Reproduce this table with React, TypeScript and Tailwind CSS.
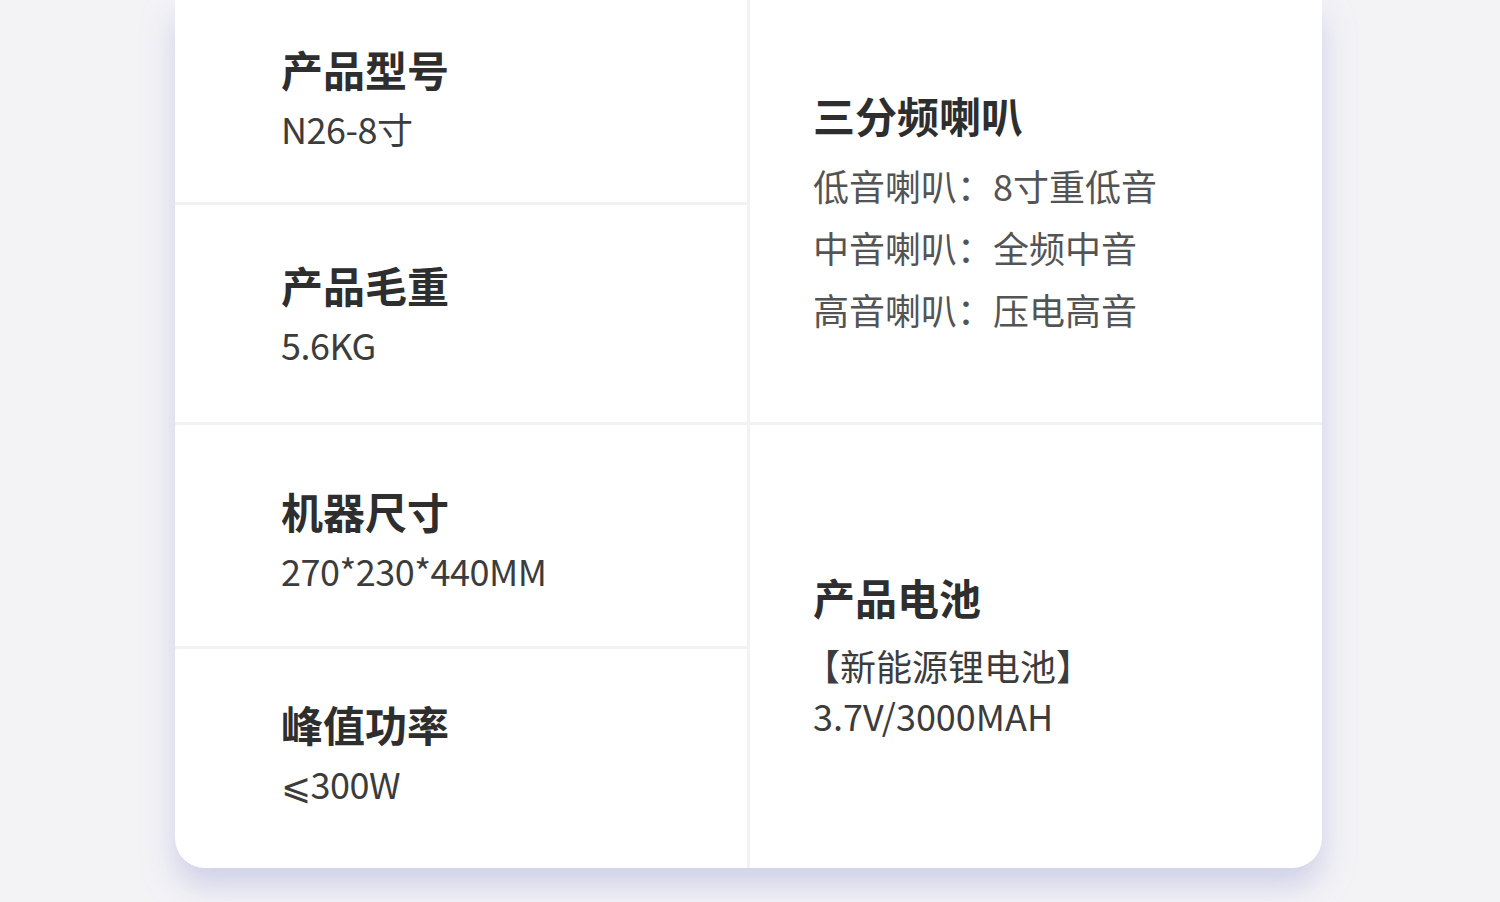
import React from "react";

const font = { fontFamily: '"Noto Sans CJK SC", "Noto Sans", sans-serif' };

type Spec = { title: string; value: string; cls: string; last?: boolean };

const leftSpecs: Spec[] = [
  { title: "产品型号", value: "N26-8寸", cls: "h-[205px] pb-[7px]" },
  { title: "产品毛重", value: "5.6KG", cls: "h-[220px]" },
  { title: "机器尺寸", value: "270*230*440MM", cls: "h-[224px] pt-[8px]" },
  { title: "峰值功率", value: "⩽300W", cls: "h-[219px] pb-[12px]", last: true },
];

const speakers = [
  ["低音喇叭：", "8寸重低音"],
  ["中音喇叭：", "全频中音"],
  ["高音喇叭：", "压电高音"],
];

export default function App() {
  return (
    <div className="h-[902px] w-full overflow-hidden bg-[#f3f3f6]" style={font}>
      <div className="ml-[175px] flex h-[868px] w-[1147px] rounded-b-[30px] bg-white shadow-[0_18px_30px_rgba(185,185,225,0.6)]">
        {/* left column */}
        <div className="flex w-[575px] flex-col border-r-[3px] border-[#f2f2f2]">
          {leftSpecs.map((s) => (
            <div
              key={s.title}
              className={`${s.cls} flex flex-col justify-center pl-[106px] ${
                s.last ? "" : "border-b-[3px] border-[#f2f2f2]"
              }`}
            >
              <div className="text-[42px] font-bold leading-[50px] text-[#2e2e2e]">{s.title}</div>
              <div className="mt-[10px] text-[36px] leading-[48px] tracking-[-0.5px] text-[#3c3c3c]">
                {s.value}
              </div>
            </div>
          ))}
        </div>

        {/* right column */}
        <div className="flex flex-1 flex-col">
          <div className="flex h-[425px] flex-col justify-center border-b-[3px] border-[#f2f2f2] pl-[63px] pt-[7px]">
            <div className="text-[42px] font-bold leading-[50px] text-[#2e2e2e]">三分频喇叭</div>
            <div className="mt-[14px] flex flex-col">
              {speakers.map(([k, v]) => (
                <div key={k} className="flex text-[36px] leading-[62px] text-[#545454]">
                  <span>{k}</span>
                  <span>{v}</span>
                </div>
              ))}
            </div>
          </div>
          <div className="flex flex-1 flex-col justify-center pl-[63px] pt-[18px]">
            <div className="text-[42px] font-bold leading-[50px] text-[#2e2e2e]">产品电池</div>
            <div className="-ml-[9px] mt-[18px] text-[36px] leading-[50px] text-[#3c3c3c]">【新能源锂电池】</div>
            <div className="text-[36px] leading-[50px] text-[#3c3c3c]">3.7V/3000MAH</div>
          </div>
        </div>
      </div>
    </div>
  );
}
